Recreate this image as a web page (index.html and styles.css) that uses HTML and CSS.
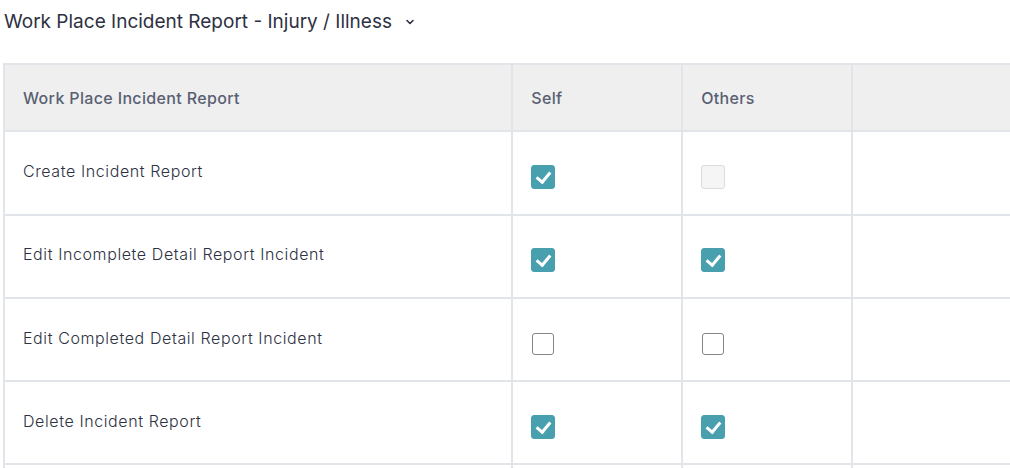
FILE: index.html
```html
<!DOCTYPE html>
<html lang="en">
<head>
  <meta charset="UTF-8">
  <title>Permissions</title>
  <link rel="stylesheet" href="styles.css">
</head>
<body>
  <div class="section-title">
    <span>Work Place Incident Report - Injury / Illness</span>
    <svg class="chevron" width="10" height="10" viewBox="0 0 10 10"><path d="M2 3.5 L5 6.5 L8 3.5" fill="none" stroke="#2d3142" stroke-width="1.6" stroke-linecap="round" stroke-linejoin="round"/></svg>
  </div>

  <!-- Permission matrix -->
  <table class="perm-table">
    <thead>
      <tr>
        <th class="col-name">Work Place Incident Report</th>
        <th class="col-check">Self</th>
        <th class="col-check">Others</th>
        <th class="col-check"></th>
      </tr>
    </thead>
    <tbody>
      <tr>
        <td>Create Incident Report</td>
        <td><span class="box checked"></span></td>
        <td><span class="box disabled"></span></td>
        <td></td>
      </tr>
      <tr>
        <td>Edit Incomplete Detail Report Incident</td>
        <td><span class="box checked"></span></td>
        <td><span class="box checked"></span></td>
        <td></td>
      </tr>
      <tr>
        <td>Edit Completed Detail Report Incident</td>
        <td><span class="box"></span></td>
        <td><span class="box"></span></td>
        <td></td>
      </tr>
      <tr>
        <td>Delete Incident Report</td>
        <td><span class="box checked"></span></td>
        <td><span class="box checked"></span></td>
        <td></td>
      </tr>
      <!-- next row starts just below the fold -->
      <tr class="spacer-row">
        <td></td>
        <td></td>
        <td></td>
        <td></td>
      </tr>
    </tbody>
  </table>
</body>
</html>
```

FILE: styles.css
```css
body {
  margin: 0;
  padding: 0 3px;
  font-family: Inter, "Open Sans", sans-serif;
  color: #2d3142;
  background: #fff;
  overflow: hidden;
}
.section-title {
  display: flex;
  align-items: center;
  gap: 13px;
  height: 42px;
  padding-left: 1px;
  font-size: 19px;
  color: #2d3142;
}
.chevron {
  margin-top: 2px;
}
/* Table with the permission checkboxes */
.perm-table {
  margin-top: 21px;
  border-collapse: collapse;
  width: 1020px;
  table-layout: fixed;
}
.perm-table th,
.perm-table td {
  border: 2px solid #e1e4e8;
  padding: 0 18px;
  text-align: left;
}
.perm-table th {
  height: 65.3px;
  background: #efefef;
  font-weight: 500;
  font-size: 16px;
  letter-spacing: 0.35px;
  color: #596072;
}
.perm-table td {
  height: 77.3px;
  font-size: 16px;
  font-weight: 300;
  letter-spacing: 0.6px;
  color: #2d3142;
  padding-bottom: 4px;
}
.col-name {
  width: 469px;
}
.col-check {
  width: 131.5px;
}
.box {
  display: block;
  width: 22px;
  height: 22px;
  margin: 12px 0 0 1px;
  border: 1.5px solid #858585;
  border-radius: 3px;
  box-sizing: border-box;
  background: #fff;
  position: relative;
}
.box.disabled,
.box.checked {
  width: 24px;
  height: 24px;
  margin-left: 0;
}
.box.disabled {
  background: #f5f5f5;
  border-color: #dcdcdc;
}
.box.checked {
  background: #489fae;
  border-color: #489fae;
}
.box.checked::after {
  content: "";
  position: absolute;
  left: 7px;
  top: 3px;
  width: 6px;
  height: 11px;
  border: solid #fff;
  border-width: 0 3px 3px 0;
  transform: rotate(40deg);
}
```
